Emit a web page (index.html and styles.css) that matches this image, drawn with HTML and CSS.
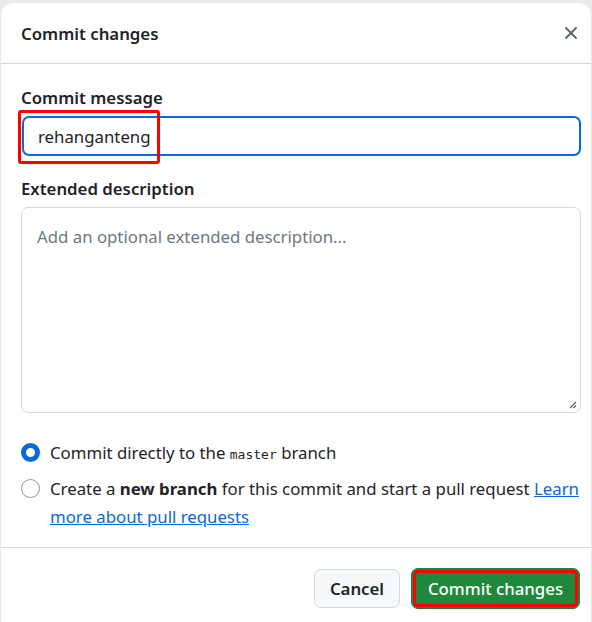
FILE: index.html
```html
<!DOCTYPE html>
<html>
<head>
<meta charset="utf-8">
<link rel="stylesheet" href="styles.css">
</head>
<body>
<div class="dialog">
  <div class="dialog-header">
    <h1 class="dialog-title">Commit changes</h1>
    <button class="close-btn" aria-label="Close">
      <svg width="14" height="14" viewBox="0 0 14 14"><path d="M2 2 L12 12 M12 2 L2 12" stroke="#59636e" stroke-width="1.8" stroke-linecap="round"/></svg>
    </button>
  </div>
  <div class="dialog-body">
    <label class="field-label">Commit message</label>
    <div class="input-wrap">
      <div class="text-input">rehanganteng</div>
      <span class="highlight-box"></span>
    </div>
    <label class="field-label">Extended description</label>
    <div class="textarea">
      <span class="placeholder">Add an optional extended description...</span>
      <svg class="grip" width="8" height="8" viewBox="0 0 8 8"><path d="M7 1 L1 7 M7 4.5 L4.5 7" stroke="#57606a" stroke-width="1.2"/></svg>
    </div>
    <div class="radios">
      <div class="radio-row">
        <span class="radio checked"></span>
        <span class="radio-text">Commit directly to the <code class="mono">master</code> branch</span>
      </div>
      <div class="radio-row">
        <span class="radio"></span>
        <div class="radio-text multi">
          <div>Create a <strong>new branch</strong> for this commit and start a pull request <a class="link" href="#">Learn</a></div>
          <div><a class="link" href="#">more about pull requests</a></div>
        </div>
      </div>
    </div>
  </div>
  <div class="dialog-footer">
    <button class="btn btn-default">Cancel</button>
    <button class="btn btn-primary">Commit changes</button>
  </div>
</div>
</body>
</html>
```

FILE: styles.css
```css
* { box-sizing: border-box; }
html, body { margin: 0; padding: 0; }
body {
  background: #e7e9ec;
  font-family: "Noto Sans", "Open Sans", sans-serif;
  color: #1f2328;
  width: 592px;
  height: 622px;
  overflow: hidden;
}
.dialog {
  margin: 3px 0 0 1px;
  width: 590px;
  height: 630px;
  background: #ffffff;
  border-radius: 12px;
  display: flex;
  flex-direction: column;
}
.dialog-header {
  height: 61px;
  flex: none;
  display: flex;
  align-items: center;
  justify-content: space-between;
  padding: 2px 13px 0 20px;
  border-bottom: 1px solid #d1d9e0;
}
.dialog-title {
  margin: 0;
  font-size: 16.8px;
  font-weight: 600;
  line-height: 20px;
}
.close-btn {
  background: none;
  border: 0;
  padding: 0;
  width: 14px;
  height: 14px;
  display: flex;
  margin-top: -2px;
}
.dialog-body {
  padding: 24px 10px 0 20px;
  display: flex;
  flex-direction: column;
  height: 484px;
  flex: none;
  border-bottom: 1px solid #d1d9e0;
}
.field-label {
  font-size: 16.8px;
  font-weight: 600;
  line-height: 20px;
  margin-bottom: 8px;
}
.input-wrap {
  position: relative;
  margin-bottom: 23px;
}
.text-input {
  height: 40px;
  margin-left: 1px;
  border: 2px solid #0969da;
  border-radius: 7px;
  padding: 0 14px;
  display: flex;
  align-items: center;
  font-size: 16.8px;
  color: #1f2328;
}
.highlight-box {
  position: absolute;
  left: -3px;
  top: -6px;
  width: 142px;
  height: 54px;
  border: 3px solid #ff0000;
  border-radius: 3px;
}
.textarea {
  position: relative;
  height: 206px;
  border: 1px solid #d1d9e0;
  border-radius: 7px;
  padding: 17px 15px;
  font-size: 16.8px;
  line-height: 24px;
}
.placeholder { color: #6e7781; }
.grip {
  position: absolute;
  right: 3px;
  bottom: 3px;
}
.radios {
  margin-top: 28px;
  display: flex;
  flex-direction: column;
  gap: 10px;
}
.radio-row {
  display: flex;
  align-items: flex-start;
  gap: 10px;
  font-size: 16.8px;
  line-height: 24px;
}
.radio-text.multi { line-height: 28px; margin-top: -2px; }
.radio {
  flex: none;
  width: 19px;
  height: 19px;
  margin-top: 2px;
  border-radius: 50%;
  border: 1px solid #8c959f;
  background: #fff;
}
.radio.checked {
  border: 5px solid #0969da;
}
.mono {
  font-family: "DejaVu Sans Mono", "Liberation Mono", monospace;
  font-size: 13px;
}
strong { font-weight: 700; }
.link {
  color: #0969da;
  text-decoration: underline;
}
.dialog-footer {
  display: flex;
  justify-content: flex-end;
  gap: 11px;
  padding: 20px 11px 0 0;
}
.btn {
  font-family: inherit;
  font-size: 16.8px;
  font-weight: 600;
  height: 40px;
  border-radius: 7px;
  padding: 0 8px;
  white-space: nowrap;
  cursor: pointer;
}
.btn-default {
  background: #f6f8fa;
  border: 1px solid #d1d9e0;
  color: #1f2328;
  height: 39px;
  width: 86px;
  margin-top: 1px;
}
.btn-primary {
  background: #1f883d;
  border: 1px solid #1a7f37;
  color: #ffffff;
  width: 169px;
  height: 41px;
  font-weight: 500;
  outline: 3px solid #ff0000;
  outline-offset: -5px;
}
```
